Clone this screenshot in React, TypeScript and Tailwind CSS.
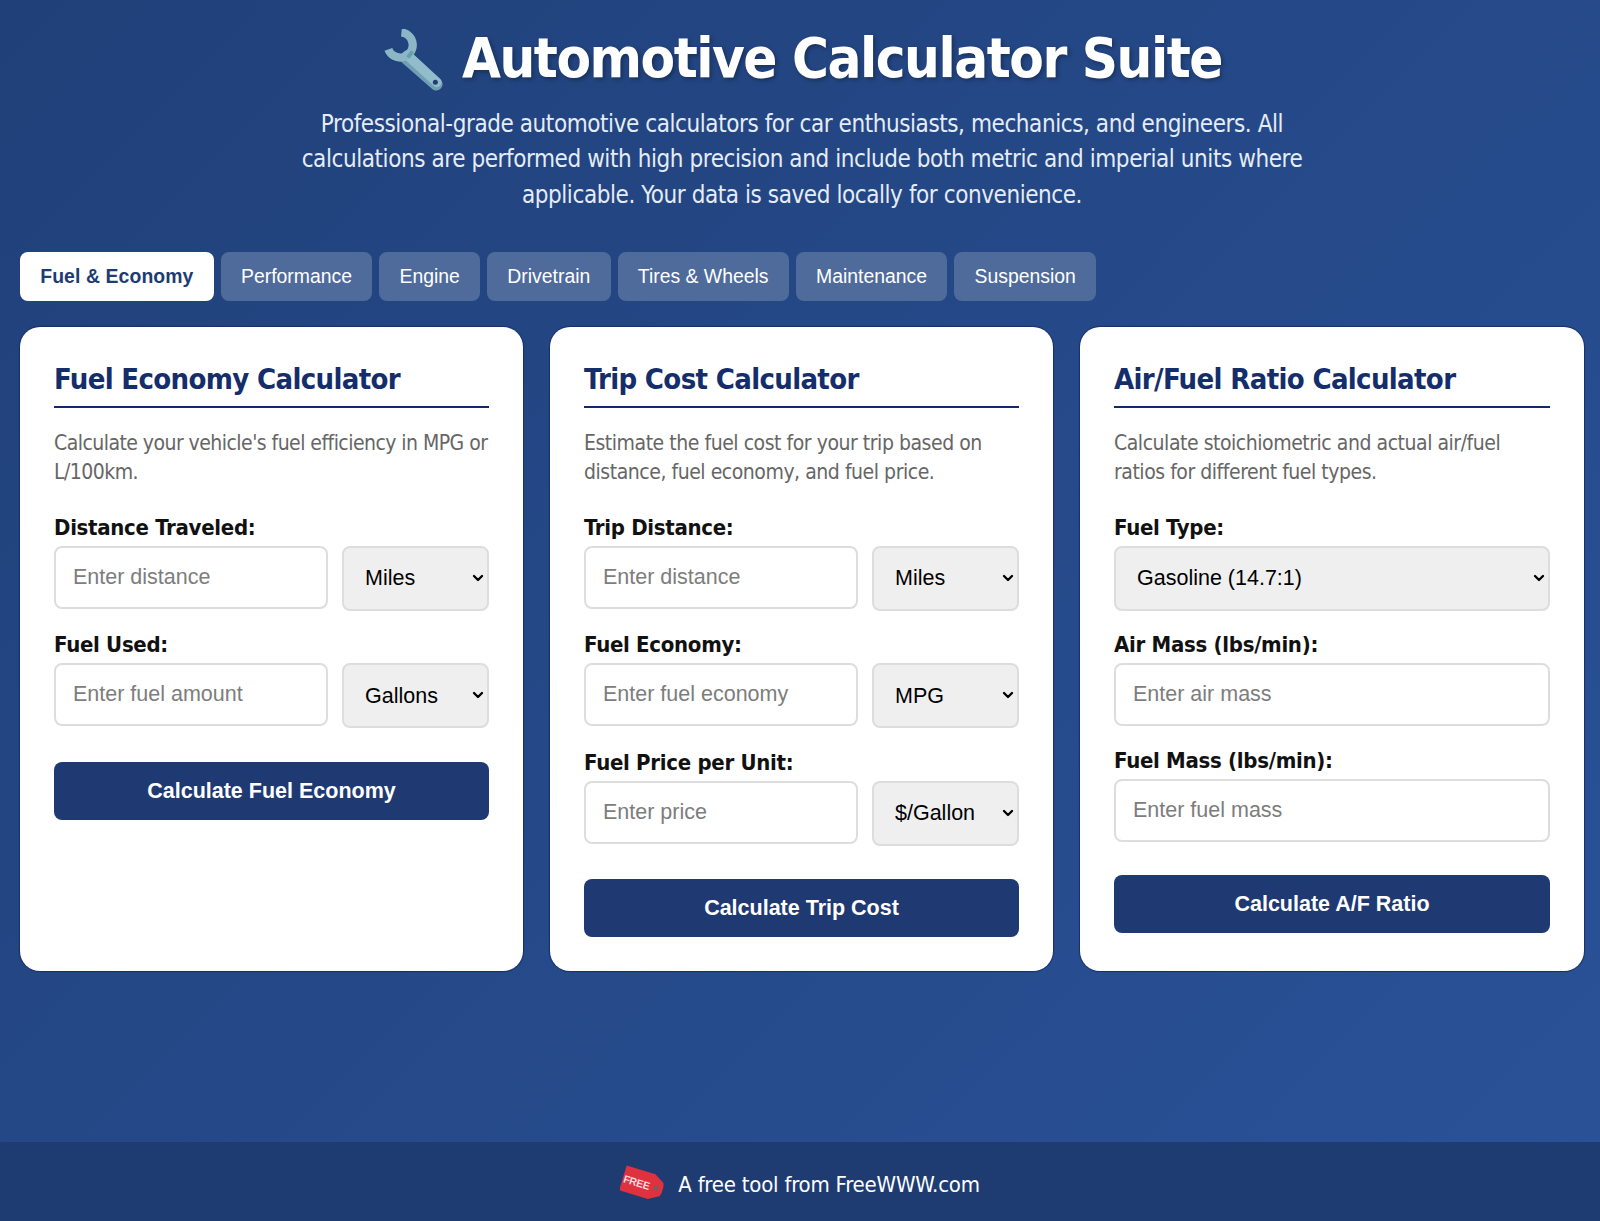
import React from "react";
import { ChevronDown } from "lucide-react";

const TAHOMA = "font-['DejaVu_Sans','Noto_Sans',sans-serif] [font-stretch:condensed]";
const ARIAL = "font-['Liberation_Sans',sans-serif]";

function Wrench() {
  return (
    <svg viewBox="0 0 64 64" className="w-[62px] h-[62px] mt-[4px] ml-[2px] shrink-0" aria-hidden="true">
      <path d="M23 30L54 57" stroke="#6f9fb2" strokeWidth="13" strokeLinecap="round" fill="none" />
      <path d="M24 27L54.5 55" stroke="#93bccb" strokeWidth="10" strokeLinecap="round" fill="none" />
      <path d="M18 3.5A13 13 0 1 1 4.5 21" stroke="#8cb6c6" strokeWidth="8.5" fill="none" />
      <path d="M23 28l5-6 3 2.500-5 6z" fill="#5fa3a8" />
      <circle cx="53" cy="55" r="2.6" fill="#1f3f78" />
    </svg>
  );
}

function Tag() {
  return (
    <svg viewBox="0 0 46 38" className="w-[46px] h-[38px] shrink-0" aria-hidden="true">
      <g transform="rotate(17 23 19)">
        <path d="M2 6h30l10 6c2 2 2 12 0 14l-10 6H2z" fill="#e0313f" />
        <circle cx="36.500" cy="19" r="2.200" fill="#5d6a5c" />
        <text x="16.500" y="23" textAnchor="middle" fontSize="10.500" fontWeight="700" fill="#ffd8dc" fontFamily="Liberation Sans, sans-serif">FREE</text>
      </g>
    </svg>
  );
}

function Sel({ value, className }: { value: string; className: string }) {
  return (
    <div className={`relative h-[65px] ${className}`}>
      <select className={`appearance-none w-full h-full pl-[21px] border-2 border-[#ddd] rounded-[8px] bg-[#efefef] text-[21.500px] text-black ${ARIAL}`}>
        <option>{value}</option>
      </select>
      <ChevronDown size={16} strokeWidth={3.5} className="absolute right-[3px] top-[24px] text-black pointer-events-none" />
    </div>
  );
}

function Label({ text }: { text: string }) {
  return <label className={`block mb-[4px] text-[22px] leading-[28px] font-bold tracking-[-0.3px] text-[#111] ${TAHOMA}`}>{text}</label>;
}

function Field({ label, placeholder, unit }: { label: string; placeholder: string; unit?: string }) {
  return (
    <div className="mb-[20.300px]">
      <Label text={label} />
      <div className="flex gap-[14px] items-start">
        <input
          placeholder={placeholder}
          className={`flex-1 min-w-0 h-[63px] px-[17px] border-2 border-[#ddd] rounded-[8px] bg-white text-[21.500px] placeholder:text-[#7d7d7d] ${ARIAL}`}
        />
        {unit && <Sel value={unit} className="w-[147px]" />}
      </div>
    </div>
  );
}

function SelectField({ label, value }: { label: string; value: string }) {
  return (
    <div className="mb-[20.300px]">
      <Label text={label} />
      <Sel value={value} className="w-full" />
    </div>
  );
}

function Card({ title, desc, button, tight, children }: { title: string; desc: string; button: string; tight?: boolean; children: React.ReactNode }) {
  return (
    <section className="bg-white rounded-[20px] h-[644px] px-[34px] pt-[33px] shadow-[0_0_1px_1px_#17306a]">
      <h2 className={`text-[29px] leading-[38px] font-bold tracking-[-0.66px] text-[#142d6b] border-b-2 border-[#0f2a6a] pb-[8px] ${TAHOMA}`}>{title}</h2>
      <p className={`mt-[21px] mb-[28px] text-[21px] leading-[28.5px] text-[#666] ${tight ? "tracking-[-0.54px]" : "tracking-[-0.46px]"} ${TAHOMA}`}>{desc}</p>
      {children}
      <button className={`w-full h-[58px] mt-[13px] rounded-[8px] bg-[#1f3a72] text-white text-[21.500px] font-bold ${ARIAL}`}>{button}</button>
    </section>
  );
}

const tabs = ["Fuel & Economy", "Performance", "Engine", "Drivetrain", "Tires & Wheels", "Maintenance", "Suspension"];

export default function App() {
  return (
    <div className="min-h-[1221px] flex flex-col bg-[linear-gradient(135deg,#204079,#2a5298)]">
      <main className="flex-1 pl-[20px] pr-[16px]">
        <header className="pt-[20px] text-center">
          <h1 className={`flex items-center justify-center gap-[16px] text-[56px] leading-[76px] font-bold tracking-[-1.5px] text-white [text-shadow:2px_2px_4px_rgba(0,0,0,0.3)] ${TAHOMA}`}>
            <Wrench />
            <span>Automotive Calculator Suite</span>
          </h1>
          <p className={`mx-auto mt-[10.500px] w-[1010px] text-[24px] leading-[35.7px] tracking-[-0.43px] text-[#e6ecf6] ${TAHOMA}`}>
            Professional-grade automotive calculators for car enthusiasts, mechanics, and engineers. All calculations are performed with high precision and include both metric and imperial units where applicable. Your data is saved locally for convenience.
          </p>
        </header>
        <nav className="mt-[38.500px] flex gap-[7.100px]">
          {tabs.map((t, i) => (
            <button
              key={t}
              className={
                i === 0
                  ? `h-[49px] px-[20.200px] rounded-[8px] bg-white text-[#1e3c72] text-[19.400px] font-bold tracking-[0.1px] ${ARIAL}`
                  : `h-[49px] px-[20.200px] rounded-[8px] bg-[#4e6b9c] text-white text-[19.400px] ${ARIAL}`
              }
            >
              {t}
            </button>
          ))}
        </nav>
        <div className="mt-[26px] grid grid-cols-[503px_503px_1fr] gap-[27px]">
          <Card tight title="Fuel Economy Calculator" desc="Calculate your vehicle's fuel efficiency in MPG or L/100km." button="Calculate Fuel Economy">
            <Field label="Distance Traveled:" placeholder="Enter distance" unit="Miles" />
            <Field label="Fuel Used:" placeholder="Enter fuel amount" unit="Gallons" />
          </Card>
          <Card title="Trip Cost Calculator" desc="Estimate the fuel cost for your trip based on distance, fuel economy, and fuel price." button="Calculate Trip Cost">
            <Field label="Trip Distance:" placeholder="Enter distance" unit="Miles" />
            <Field label="Fuel Economy:" placeholder="Enter fuel economy" unit="MPG" />
            <Field label="Fuel Price per Unit:" placeholder="Enter price" unit="$/Gallon" />
          </Card>
          <Card title="Air/Fuel Ratio Calculator" desc="Calculate stoichiometric and actual air/fuel ratios for different fuel types." button="Calculate A/F Ratio">
            <SelectField label="Fuel Type:" value="Gasoline (14.7:1)" />
            <Field label="Air Mass (lbs/min):" placeholder="Enter air mass" />
            <Field label="Fuel Mass (lbs/min):" placeholder="Enter fuel mass" />
          </Card>
        </div>
      </main>
      <footer className={`h-[79px] pt-[5px] flex items-center justify-center gap-[12px] bg-[#1e3c72] text-white text-[22px] tracking-[-0.22px] ${TAHOMA}`}>
        <Tag />
        <span>A free tool from FreeWWW.com</span>
      </footer>
    </div>
  );
}
